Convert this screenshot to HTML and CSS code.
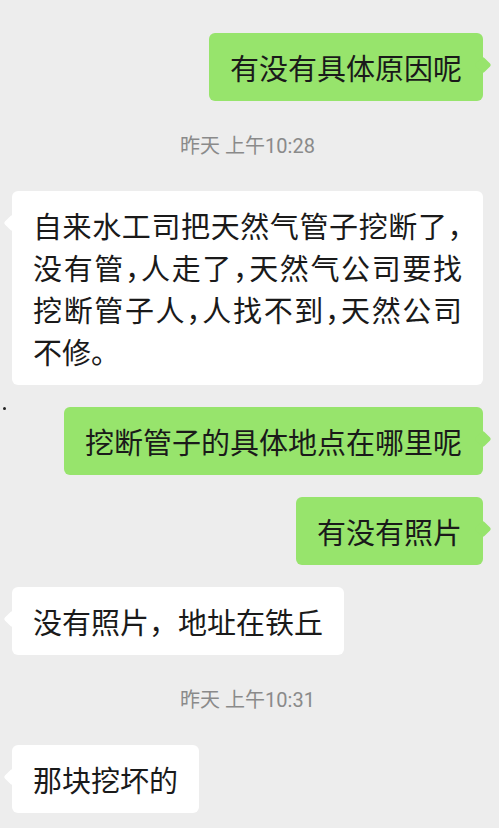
FILE: index.html
```html
<!doctype html>
<html lang="zh-CN">
<head>
  <meta charset="utf-8">
  <meta name="viewport" content="width=device-width,initial-scale=1">
  <title>聊天记录</title>
  <link rel="stylesheet" href="styles.css">
</head>
<body>
  <div class="chat">
    <span class="speck"></span>
    <div class="msg me"><div class="bubble">有没有具体原因呢</div></div>
    <div class="time">昨天 上午10:28</div>
    <div class="msg other"><div class="bubble long">自来水工司把天然气管子挖断了，没有管，人走了，天然气公司要找挖断管子人，人找不到，天然公司不修。</div></div>
    <div class="msg me"><div class="bubble">挖断管子的具体地点在哪里呢</div></div>
    <div class="msg me"><div class="bubble">有没有照片</div></div>
    <div class="msg other"><div class="bubble">没有照片，地址在铁丘</div></div>
    <div class="time">昨天 上午10:31</div>
    <div class="msg other"><div class="bubble">那块挖坏的</div></div>
  </div>
</body>
</html>
```

FILE: styles.css
```css
html,body{margin:0;padding:0;background:#ededed}
body{font-family:"Noto Sans CJK SC",sans-serif;color:#1a1a1a;overflow:hidden}
.chat{position:relative;display:flex;flex-direction:column;gap:22px;padding:33px 16px 0 12px}
.msg{display:flex}
.msg.me{justify-content:flex-end}
.msg.other{justify-content:flex-start}
.bubble{position:relative;max-width:100%;box-sizing:border-box;padding:13px 21px;font-size:29px;line-height:42px;border-radius:6px;background:#fff}
.bubble::after{content:"";position:absolute;top:26px;width:12px;height:12px;border-radius:2px;transform:rotate(45deg);background:inherit}
.me .bubble{background:#97e46c}
.me .bubble::after{right:-6px}
.other .bubble::after{left:-6px}
.bubble.long{text-align:justify;font-feature-settings:"halt"}
.time{margin:11px 0;text-align:center;font-family:Roboto,"Noto Sans CJK SC",sans-serif;font-size:20px;line-height:24px;color:#8a8a8a}
.speck{position:absolute;left:3px;top:407px;width:3px;height:3px;border-radius:50%;background:#222}
```
